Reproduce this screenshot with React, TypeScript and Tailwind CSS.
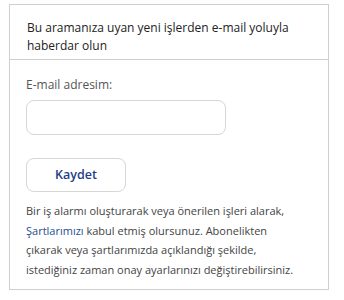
import React from 'react';

export default function App() {
  return (
    <div className="w-[344px] h-[300px] bg-white pt-[4px] pl-[9px]" style={{ fontFamily: '"Open Sans", sans-serif' }}>
      <div className="w-[320px] border border-[#cfcfcf] bg-white">
        <div className="border-b border-[#cfcfcf] px-[17px] pt-[14px] pb-[4px]">
          <h3 className="text-[12px] leading-[18px] text-[#222] font-normal">
            Bu aramanıza uyan yeni işlerden e-mail yoluyla haberdar olun
          </h3>
        </div>
        <div className="px-[16px] pt-[16px] pb-[10px]">
          <label className="block text-[12px] leading-[18px] text-[#555] mb-[6px]">E-mail adresim:</label>
          <input
            type="email"
            className="block w-[200px] h-[35px] rounded-[8px] border border-[#d6d6d6] outline-none px-3 text-[12px]"
          />
          <button className="mt-[23px] w-[100px] h-[34px] rounded-[8px] border border-[#d6d6d6] bg-white text-[12.5px] font-semibold text-[#1f3d8a]">
            Kaydet
          </button>
          <p className="mt-[9px] w-[276px] text-[11px] leading-[19.5px] text-[#444]">
            Bir iş alarmı oluşturarak veya önerilen işleri alarak,{' '}
            <a href="#" className="text-[#1d4f91]">Şartlarımızı</a> kabul etmiş olursunuz. Abonelikten
            çıkarak veya şartlarımızda açıklandığı şekilde, istediğiniz zaman onay ayarlarınızı değiştirebilirsiniz.
          </p>
        </div>
      </div>
    </div>
  );
}
